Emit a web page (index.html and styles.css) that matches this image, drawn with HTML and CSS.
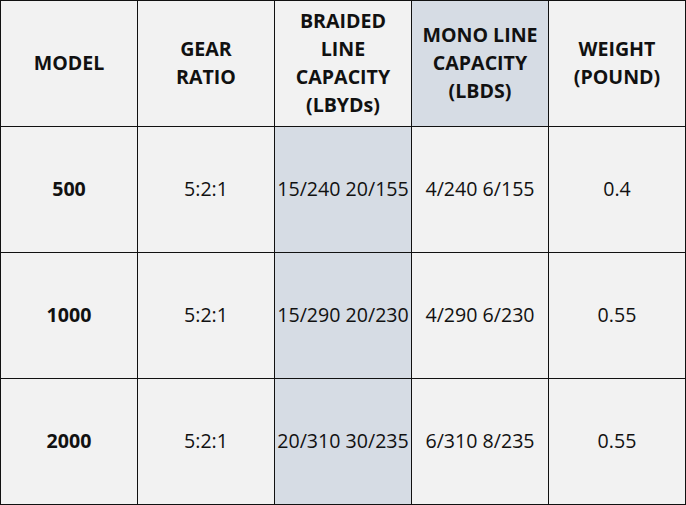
FILE: index.html
```html
<!DOCTYPE html>
<html>
<head>
<meta charset="utf-8">
<link rel="stylesheet" href="styles.css">
</head>
<body>
<div class="grid">
  <div class="cell head">MODEL</div>
  <div class="cell head">GEAR<br>RATIO</div>
  <div class="cell head">BRAIDED<br>LINE<br>CAPACITY<br>(LBYDs)</div>
  <div class="cell head hl">MONO LINE<br>CAPACITY<br>(LBDS)</div>
  <div class="cell head">WEIGHT<br>(POUND)</div>

  <div class="cell model">500</div>
  <div class="cell">5:2:1</div>
  <div class="cell hl">15/240 20/155</div>
  <div class="cell">4/240 6/155</div>
  <div class="cell">0.4</div>

  <div class="cell model">1000</div>
  <div class="cell">5:2:1</div>
  <div class="cell hl">15/290 20/230</div>
  <div class="cell">4/290 6/230</div>
  <div class="cell">0.55</div>

  <div class="cell model">2000</div>
  <div class="cell">5:2:1</div>
  <div class="cell hl">20/310 30/235</div>
  <div class="cell">6/310 8/235</div>
  <div class="cell">0.55</div>
</div>
</body>
</html>
```
FILE: styles.css
```css
html, body {
  margin: 0;
  padding: 0;
  background: #ffffff;
}
.grid {
  display: grid;
  grid-template-columns: repeat(5, 136px);
  grid-template-rows: repeat(4, 125px);
  gap: 1px;
  padding: 1px;
  background: #111111;
  width: max-content;
  font-family: "Open Sans", "Noto Sans", sans-serif;
  font-size: 19.6px;
  color: #111111;
}
.cell {
  background: #f2f2f2;
  display: flex;
  align-items: center;
  justify-content: center;
  text-align: center;
  white-space: nowrap;
  line-height: 28px;
  padding-bottom: 2px;
}
.hl {
  background: #d6dce4;
}
.head {
  font-weight: 700;
}
.model {
  font-weight: 700;
}
```
